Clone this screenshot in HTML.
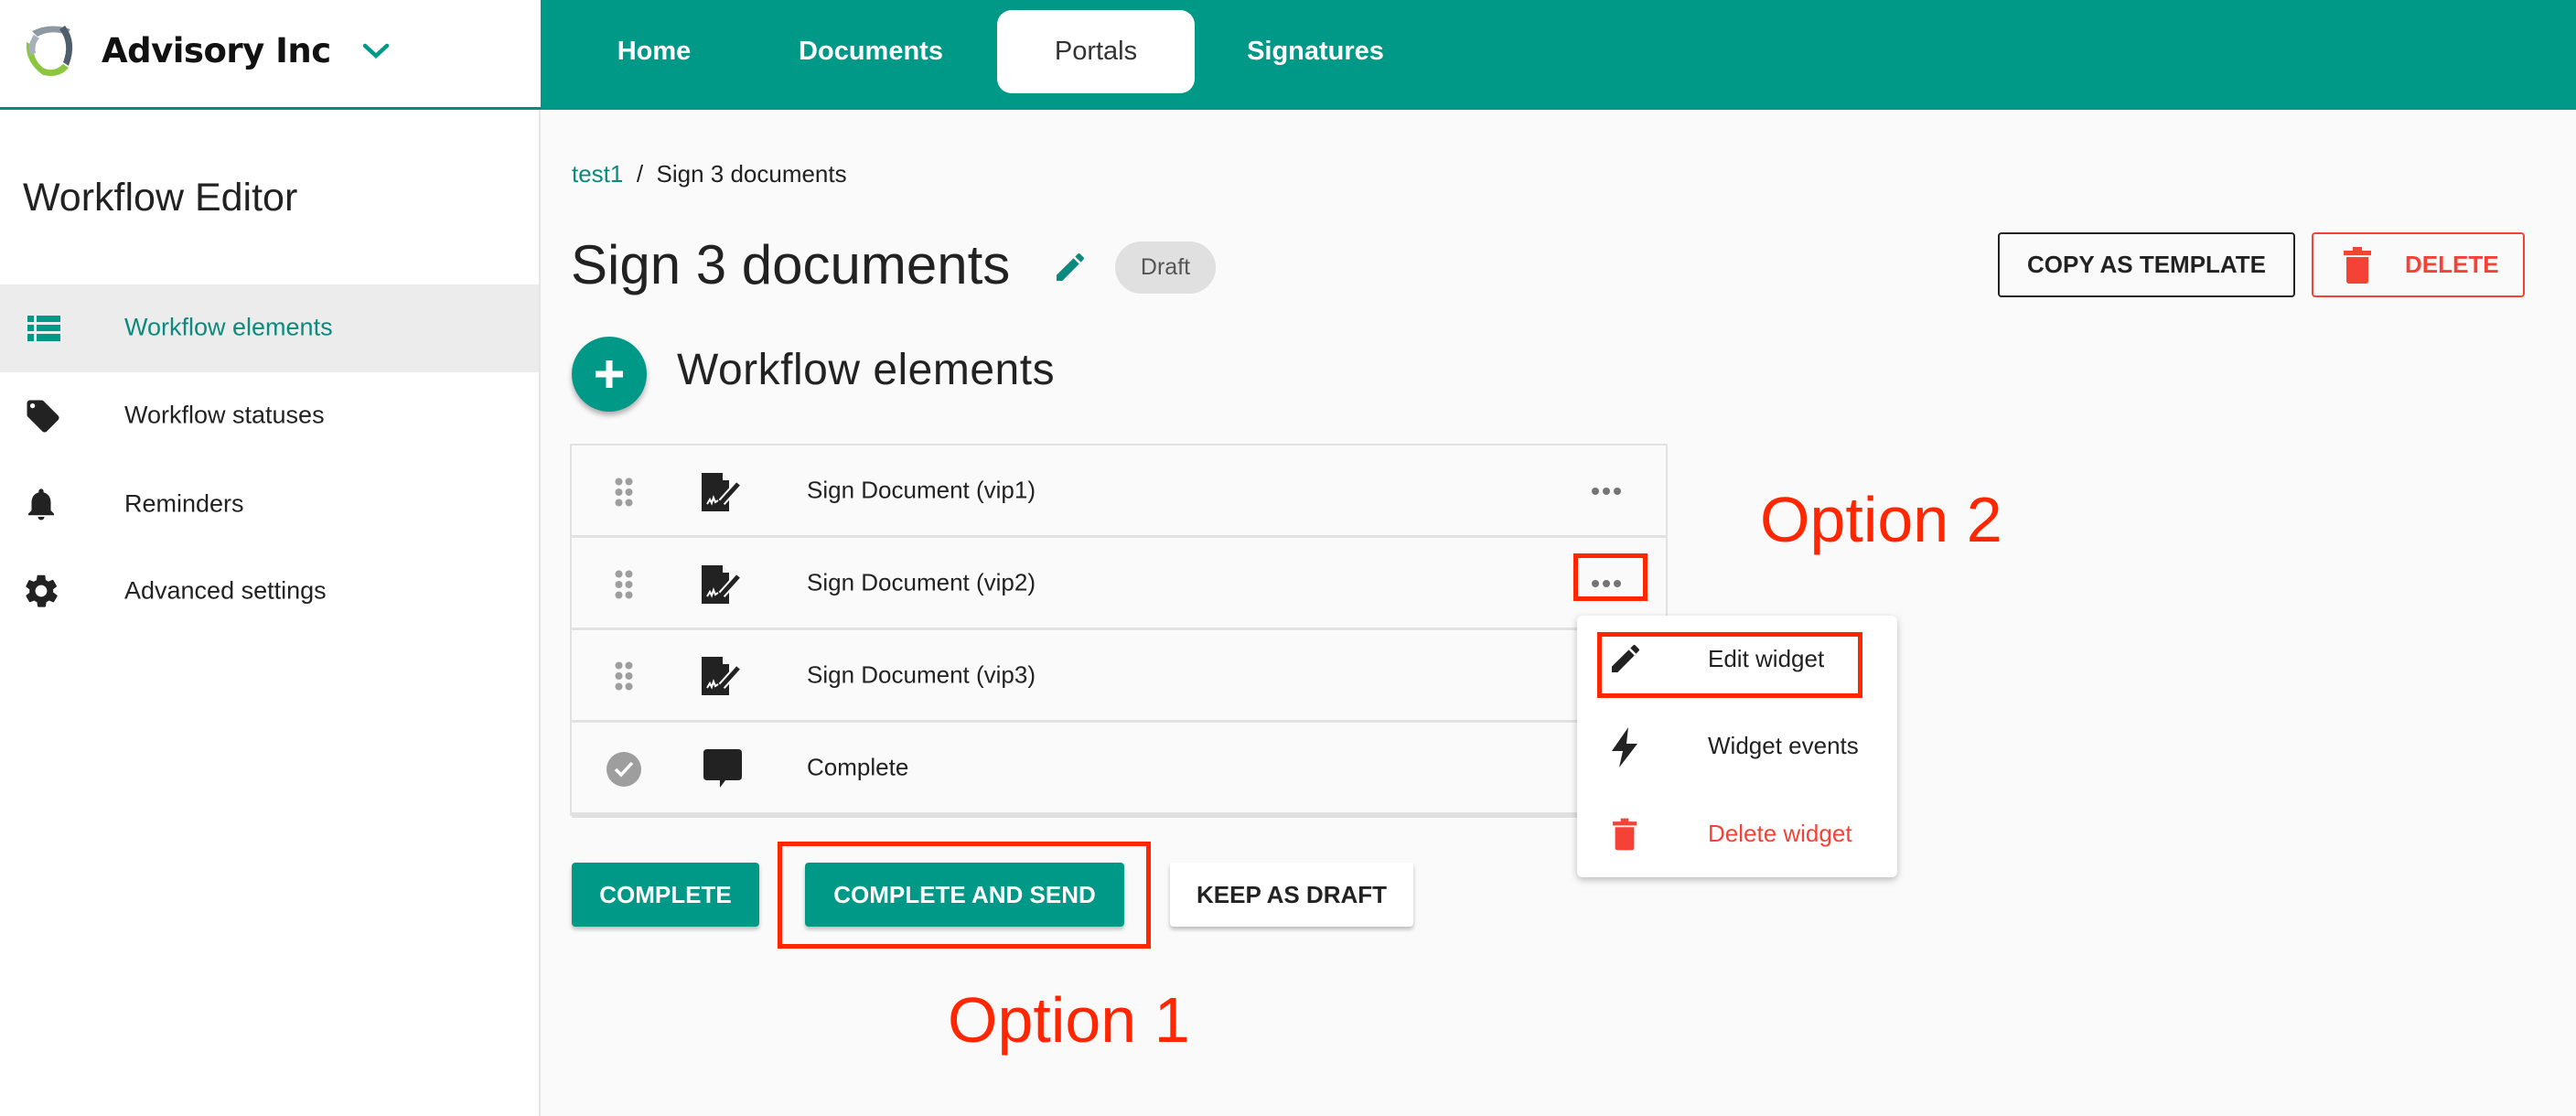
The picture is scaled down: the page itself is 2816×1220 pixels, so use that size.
<!DOCTYPE html>
<html><head><meta charset="utf-8"><style>
*{margin:0;padding:0;box-sizing:border-box}
body{width:2816px;height:1220px;overflow:hidden;background:#fafafa;font-family:"Liberation Sans",sans-serif;position:relative;color:#212121}
.a{position:absolute}
.nav{left:591px;top:0;width:2225px;height:120px;background:#009887}
.nt{position:absolute;top:0;height:120px;line-height:112px;color:#fff;font-size:29px;font-weight:bold;transform:translateX(-50%)}
.side{left:0;top:120px;width:591px;height:1100px;background:#fff;border-right:2px solid #e6e6e6}
.si{position:absolute;left:136px;font-size:27px;color:#222;transform:translateY(-50%)}
.row{position:absolute;left:0;width:1198px;height:101px;border-bottom:3px solid #e2e2e2}
.rt{position:absolute;left:257px;top:50%;transform:translateY(-50%);font-size:26px;color:#222}
.btn{position:absolute;top:943px;height:70px;border-radius:4px;font-size:26px;font-weight:bold;text-align:center;line-height:70px;box-shadow:0 3px 4px rgba(0,0,0,.25)}
.red{border:5px solid #ff2600}
</style></head><body>
<div class="a" style="left:0;top:0;width:591px;height:120px;background:#fff;border-bottom:3px solid #0b8a7d"></div>
<svg class="a" style="left:25px;top:24px" width="62" height="64" viewBox="0 0 62 64">
<path d="M10 10 Q30 0 52 8 L48 14 Q30 8 16 16 Z" fill="#8e9aa3"/>
<path d="M46 4 Q60 22 50 48 L44 44 Q52 24 40 8 Z" fill="#4f5e6a"/>
<path d="M4 22 Q2 44 22 58 Q40 62 50 50 L44 46 Q34 56 22 50 Q10 40 12 26 Z" fill="#8cc63f"/>
<path d="M12 14 Q4 26 8 36 L14 34 Q12 24 18 18 Z" fill="#a6b0b8"/>
</svg>
<div class="a" style="left:111px;top:34px;font-size:37px;font-weight:bold;color:#111;font-family:'DejaVu Sans',sans-serif;letter-spacing:-0.5px">Advisory Inc</div>
<svg class="a" style="left:396px;top:46px" width="30" height="20" viewBox="0 0 30 20"><path d="M3 4 L15 15 L27 4" stroke="#009887" stroke-width="4.5" fill="none" stroke-linecap="round"/></svg>
<div class="a nav"></div>
<div class="a" style="left:1090px;top:11px;width:216px;height:91px;background:#fff;border-radius:16px"></div>
<div class="nt" style="left:715px">Home</div>
<div class="nt" style="left:952px">Documents</div>
<div class="nt" style="left:1198px;color:#333;font-weight:normal">Portals</div>
<div class="nt" style="left:1438px">Signatures</div>
<div class="a side"></div>
<div class="a" style="left:25px;top:192px;font-size:43px;font-weight:300;color:#222">Workflow Editor</div>
<div class="a" style="left:0;top:311px;width:589px;height:96px;background:#ececec"></div>
<svg class="a" style="left:30px;top:345px" width="36" height="28" viewBox="0 0 36 28" fill="#009887"><rect x="0" y="0" width="7" height="7"/><rect x="10" y="0" width="26" height="7"/><rect x="0" y="10" width="7" height="7"/><rect x="10" y="10" width="26" height="7"/><rect x="0" y="20" width="7" height="8"/><rect x="10" y="20" width="26" height="8"/></svg>
<div class="si" style="top:358px;color:#0b8a7d">Workflow elements</div>
<svg class="a" style="left:26px;top:433px" width="42" height="44" viewBox="0 0 24 24" fill="#222"><path d="M21.4 11.6l-9-9C12.1 2.2 11.6 2 11 2H4c-1.1 0-2 .9-2 2v7c0 .6.2 1.1.6 1.4l9 9c.4.4.9.6 1.4.6s1.1-.2 1.4-.6l7-7c.4-.4.6-.9.6-1.4s-.2-1.1-.6-1.4zM5.5 7C4.7 7 4 6.3 4 5.5S4.7 4 5.5 4 7 4.7 7 5.5 6.3 7 5.5 7z"/></svg>
<div class="si" style="top:454px">Workflow statuses</div>
<svg class="a" style="left:24px;top:528px" width="42" height="46" viewBox="0 0 24 24" fill="#222"><path d="M12 22c1.1 0 2-.9 2-2h-4c0 1.1.9 2 2 2zm6-6v-5c0-3.1-1.6-5.6-4.5-6.3V4c0-.8-.7-1.5-1.5-1.5s-1.5.7-1.5 1.5v.7C7.6 5.4 6 7.9 6 11v5l-2 2v1h16v-1l-2-2z"/></svg>
<div class="si" style="top:551px">Reminders</div>
<svg class="a" style="left:23px;top:624px" width="44" height="44" viewBox="0 0 24 24" fill="#222"><path d="M19.1 12.9c0-.3.1-.6.1-.9s0-.6-.1-.9l2-1.6c.2-.1.2-.4.1-.6l-1.9-3.3c-.1-.2-.4-.3-.6-.2l-2.4 1c-.5-.4-1-.7-1.6-.9L14.4 3c0-.2-.2-.4-.5-.4h-3.8c-.2 0-.4.2-.5.4l-.4 2.6c-.6.2-1.1.6-1.6.9l-2.4-1c-.2-.1-.5 0-.6.2L3 9c-.1.2-.1.5.1.6l2 1.6c0 .3-.1.6-.1.9s0 .6.1.9l-2 1.6c-.2.1-.2.4-.1.6l1.9 3.3c.1.2.4.3.6.2l2.4-1c.5.4 1 .7 1.6.9l.4 2.6c0 .2.2.4.5.4h3.8c.2 0 .4-.2.5-.4l.4-2.6c.6-.2 1.1-.6 1.6-.9l2.4 1c.2.1.5 0 .6-.2l1.9-3.3c.1-.2.1-.5-.1-.6l-2-1.6zM12 15.5c-1.9 0-3.5-1.6-3.5-3.5s1.6-3.5 3.5-3.5 3.5 1.6 3.5 3.5-1.6 3.5-3.5 3.5z"/></svg>
<div class="si" style="top:646px">Advanced settings</div>
<div class="a" style="left:625px;top:175px;font-size:26px;color:#222"><span style="color:#0b8a7d">test1</span>&nbsp;&nbsp;/&nbsp;&nbsp;Sign 3 documents</div>
<div class="a" style="left:624px;top:255px;font-size:60px;font-weight:300;color:#222">Sign 3 documents</div>
<svg class="a" style="left:1150px;top:272px" width="40" height="40" viewBox="0 0 24 24" fill="#0b8a7d"><path d="M3 17.2V21h3.8L17.8 9.9l-3.7-3.7L3 17.2zM20.7 7c.4-.4.4-1 0-1.4l-2.3-2.3c-.4-.4-1-.4-1.4 0l-1.8 1.8 3.7 3.7L20.7 7z"/></svg>
<div class="a" style="left:1219px;top:264px;width:110px;height:57px;border-radius:29px;background:#e0e0e0;font-size:25px;color:#555;text-align:center;line-height:57px">Draft</div>
<div class="a" style="left:2184px;top:254px;width:325px;height:71px;border:2px solid #222;border-radius:4px;font-size:26px;font-weight:bold;text-align:center;line-height:67px;color:#222">COPY AS TEMPLATE</div>
<div class="a" style="left:2527px;top:254px;width:233px;height:71px;border:2px solid #f44336;border-radius:4px;font-size:26px;font-weight:bold;color:#f44336;line-height:67px;padding-left:100px">DELETE</div>
<svg class="a" style="left:2562px;top:270px" width="30" height="40" viewBox="0 0 15 20" fill="#f44336"><rect x="0" y="2" width="15" height="2.5"/><rect x="5" y="0" width="5" height="3"/><path d="M1.5 5.5h12V18.5q0 1.5-1.5 1.5H3q-1.5 0-1.5-1.5z"/></svg>
<div class="a" style="left:625px;top:368px;width:82px;height:82px;border-radius:50%;background:#009887;box-shadow:0 4px 6px rgba(0,0,0,.3)"></div>
<svg class="a" style="left:647px;top:390px" width="38" height="38" viewBox="0 0 38 38"><path d="M19 4V34M4 19H34" stroke="#fff" stroke-width="7"/></svg>
<div class="a" style="left:740px;top:377px;font-size:48px;font-weight:300;color:#222;letter-spacing:0.5px">Workflow elements</div>
<div class="a" style="left:623px;top:485px;width:1200px;height:407px;border:2px solid #e2e2e2;border-bottom:none;background:#fafafa">
 <div class="row" style="top:0"><div class="rt">Sign Document (vip1)</div></div>
 <div class="row" style="top:101px"><div class="rt">Sign Document (vip2)</div></div>
 <div class="row" style="top:202px"><div class="rt">Sign Document (vip3)</div></div>
 <div class="row" style="top:303px;border-bottom:6px solid #e0e0e0;height:104px"><div class="rt">Complete</div></div>
</div>
<svg width="0" height="0" style="position:absolute"><defs>
<g id="drag" fill="#9e9e9e"><circle cx="4.5" cy="4.5" r="4"/><circle cx="15.5" cy="4.5" r="4"/><circle cx="4.5" cy="16" r="4"/><circle cx="15.5" cy="16" r="4"/><circle cx="4.5" cy="27.5" r="4"/><circle cx="15.5" cy="27.5" r="4"/></g>
<g id="doc"><path d="M0 0H22L30 9V42H0Z" fill="#222"/><path d="M22 0V9H30" fill="#fff"/><path d="M22 0V9H30" fill="none" stroke="#222" stroke-width="2"/><path d="M6 34l3-5 2 4 2-6 2 5 3-2" stroke="#fff" stroke-width="2" fill="none"/><path d="M22 32L40 12" stroke="#fafafa" stroke-width="9"/><path d="M22 32L40 12" stroke="#222" stroke-width="5"/><path d="M19 36l2-6 3 3z" fill="#222"/></g>
<g id="dots" fill="#757575"><circle cx="4" cy="4" r="4"/><circle cx="16" cy="4" r="4"/><circle cx="28" cy="4" r="4"/></g>
</defs></svg>
<svg class="a" style="left:672px;top:522px" width="20" height="32"><use href="#drag"/></svg>
<svg class="a" style="left:672px;top:623px" width="20" height="32"><use href="#drag"/></svg>
<svg class="a" style="left:672px;top:723px" width="20" height="32"><use href="#drag"/></svg>
<svg class="a" style="left:767px;top:517px" width="46" height="44"><use href="#doc"/></svg>
<svg class="a" style="left:767px;top:618px" width="46" height="44"><use href="#doc"/></svg>
<svg class="a" style="left:767px;top:718px" width="46" height="44"><use href="#doc"/></svg>
<svg class="a" style="left:662px;top:821px" width="40" height="40" viewBox="0 0 40 40"><circle cx="20" cy="20" r="19" fill="#9e9e9e"/><path d="M11 20l6 6 12-13" stroke="#fff" stroke-width="3.5" fill="none"/></svg>
<svg class="a" style="left:769px;top:819px" width="42" height="46" viewBox="0 0 42 46"><path d="M4 0H38Q42 0 42 4V30Q42 34 38 34H24L18 42V34H4Q0 34 0 30V4Q0 0 4 0Z" fill="#222"/></svg>
<svg class="a" style="left:1740px;top:533px" width="32" height="8"><use href="#dots"/></svg>
<svg class="a" style="left:1740px;top:634px" width="32" height="8"><use href="#dots"/></svg>
<div class="a red" style="left:1720px;top:605px;width:81px;height:52px"></div>
<div class="a" style="left:1724px;top:673px;width:350px;height:286px;background:#fff;border-radius:6px;box-shadow:0 3px 8px rgba(0,0,0,.25)"></div>
<svg class="a" style="left:1757px;top:700px" width="40" height="40" viewBox="0 0 24 24" fill="#222"><path d="M3 17.2V21h3.8L17.8 9.9l-3.7-3.7L3 17.2zM20.7 7c.4-.4.4-1 0-1.4l-2.3-2.3c-.4-.4-1-.4-1.4 0l-1.8 1.8 3.7 3.7L20.7 7z"/></svg>
<div class="a" style="left:1867px;top:705px;font-size:26px;color:#222">Edit widget</div>
<div class="a red" style="left:1746px;top:691px;width:290px;height:72px"></div>
<svg class="a" style="left:1758px;top:795px" width="40" height="44" viewBox="0 0 20 22" fill="#222"><path d="M11 0L2 13h6l-2 9 10-13h-6z"/></svg>
<div class="a" style="left:1867px;top:800px;font-size:26px;color:#222">Widget events</div>
<svg class="a" style="left:1763px;top:894px" width="26" height="36" viewBox="0 0 15 20" fill="#f44336"><rect x="0" y="2" width="15" height="2.5"/><rect x="5" y="0" width="5" height="3"/><path d="M1.5 5.5h12V18.5q0 1.5-1.5 1.5H3q-1.5 0-1.5-1.5z"/></svg>
<div class="a" style="left:1867px;top:896px;font-size:26px;color:#f44336">Delete widget</div>
<div class="btn" style="left:625px;width:205px;background:#009887;color:#fff">COMPLETE</div>
<div class="btn" style="left:880px;width:349px;background:#009887;color:#fff">COMPLETE AND SEND</div>
<div class="btn" style="left:1279px;width:266px;background:#fff;color:#222">KEEP AS DRAFT</div>
<div class="a red" style="left:850px;top:920px;width:408px;height:117px"></div>
<div class="a" style="left:1036px;top:1075px;font-size:70px;color:#ff2600">Option 1</div>
<div class="a" style="left:1924px;top:528px;font-size:70px;color:#ff2600">Option 2</div>
</body></html>
